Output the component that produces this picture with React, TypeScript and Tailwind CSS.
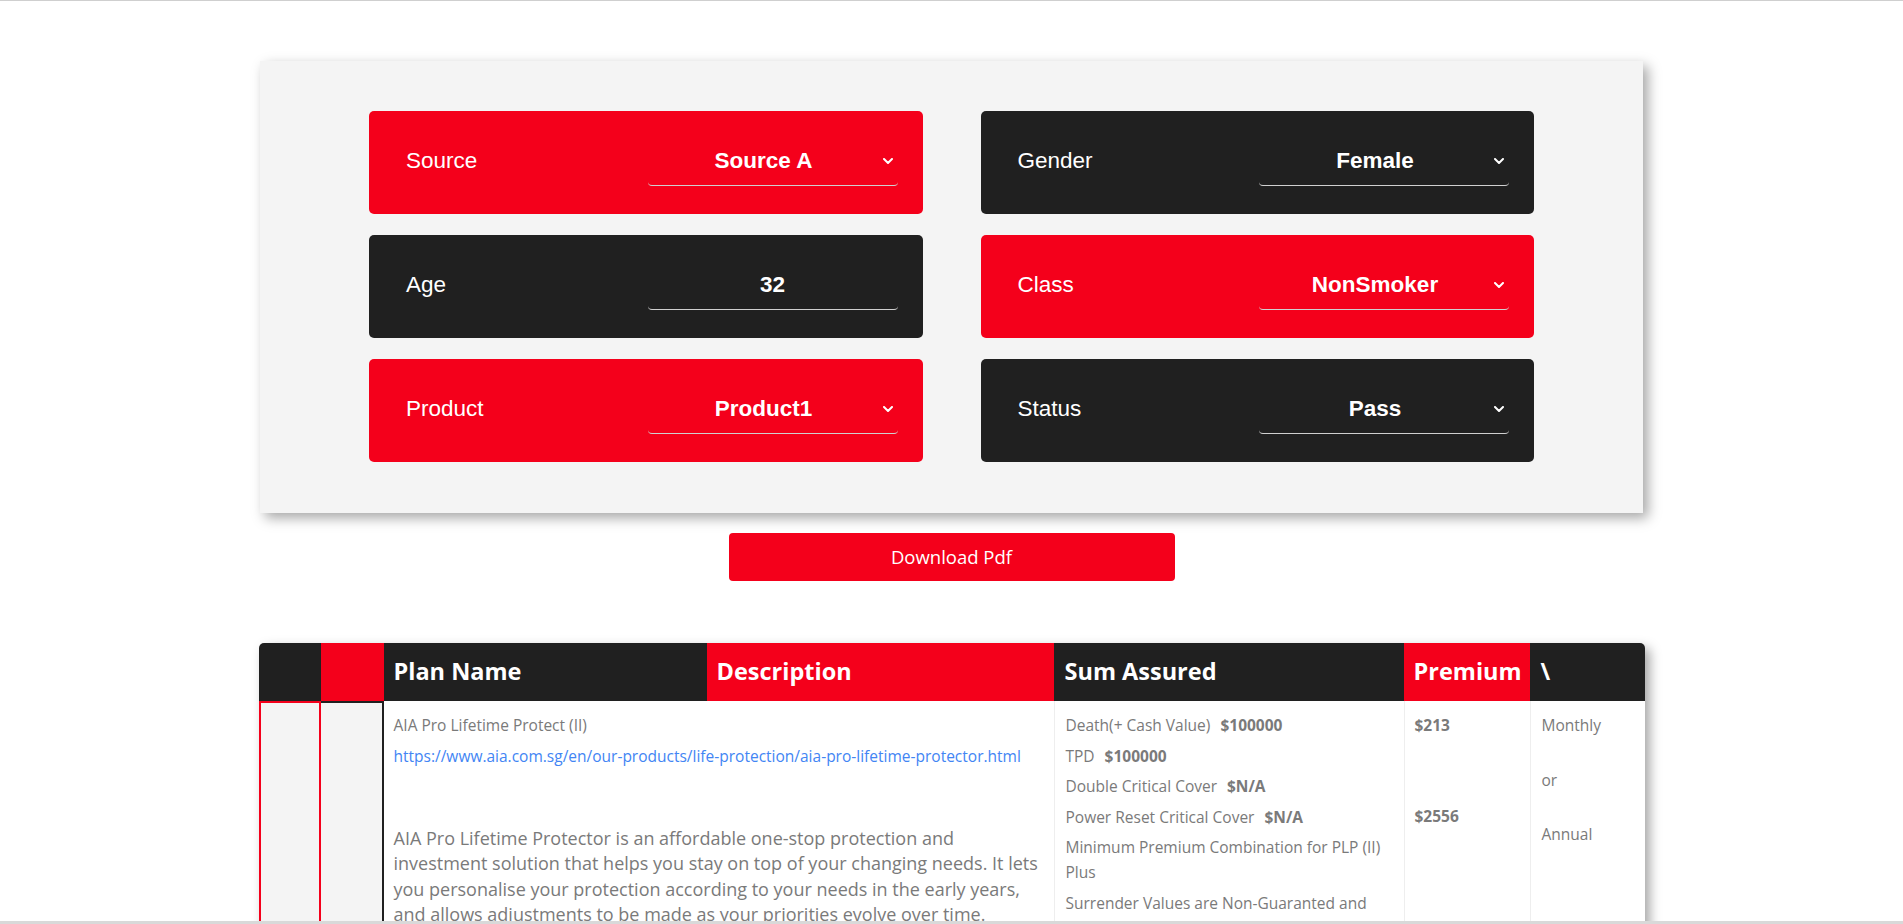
import React from "react";

function Chevron() {
  return (
    <svg width="10" height="6" viewBox="0 0 10 6" fill="none" className="block">
      <path d="M1 1 L5 5 L9 1" stroke="white" strokeWidth="2" strokeLinecap="round" strokeLinejoin="round" />
    </svg>
  );
}

function Field({ label, value, red, chevron = true }: { label: string; value: string; red: boolean; chevron?: boolean }) {
  return (
    <div
      className={`h-[103px] rounded-[5px] flex items-center justify-between pl-[37px] pr-[25px] pb-[4px] ${red ? "bg-[#f4001b]" : "bg-[#202020]"}`}
    >
      <span className="text-[22.5px] text-white font-['Liberation_Sans',Arial,sans-serif]">{label}</span>
      <div className="w-[250px] h-[49px] mt-[2px] flex items-center border-b border-[#d0d0d0] rounded-b-[4px]">
        <span className="flex-1 text-center text-[22.5px] font-bold text-white font-['Liberation_Sans',Arial,sans-serif]">
          {value}
        </span>
        {chevron && (
          <span className="ml-[3px] mr-[5px] w-[10px]">
            <Chevron />
          </span>
        )}
      </div>
    </div>
  );
}

export default function App() {
  const font = "font-['Open_Sans',sans-serif]";
  return (
    <div className={`relative w-full h-[924px] overflow-hidden bg-white border-t border-[#cfcfcf] ${font}`}>
      <div className="mt-[60px] mx-auto w-[1383px] bg-[#f4f4f4] px-[109px] pt-[50px] pb-[51px] shadow-[5px_5px_12px_rgba(0,0,0,0.35)]">
        <div className="grid grid-cols-2 gap-x-[58px] gap-y-[21px]">
          <Field label="Source" value="Source A" red />
          <Field label="Gender" value="Female" red={false} />
          <Field label="Age" value="32" red={false} chevron={false} />
          <Field label="Class" value="NonSmoker" red />
          <Field label="Product" value="Product1" red />
          <Field label="Status" value="Pass" red={false} />
        </div>
      </div>

      <div className="mt-[20px] mx-auto w-[446px] h-[48px] rounded-[4px] bg-[#f4001b] flex items-center justify-center text-white text-[18.5px]">
        Download Pdf
      </div>

      <div className="mt-[62px] mx-auto w-[1386px] rounded-t-[5px] overflow-hidden bg-white shadow-[5px_5px_12px_rgba(0,0,0,0.35)]">
        <div className="grid grid-cols-[62px_63px_323px_347px_350px_126px_115px] h-[58px] text-white font-bold text-[23.5px]">
          <div className="bg-[#202020]" />
          <div className="bg-[#f4001b]" />
          <div className="bg-[#202020] flex items-center pl-[10px]">Plan Name</div>
          <div className="bg-[#f4001b] flex items-center pl-[10px]">Description</div>
          <div className="bg-[#202020] flex items-center pl-[11px]">Sum Assured</div>
          <div className="bg-[#f4001b] flex items-center pl-[10px]">Premium</div>
          <div className="bg-[#202020] flex items-center pl-[11px]">\</div>
        </div>
        <div className="grid grid-cols-[62px_63px_670px_350px_126px_115px] h-[300px] text-[#7a7a7a]">
          <div className="bg-[#f4f4f4] border-l-2 border-t-2 border-r-2 border-[#f4001b]" />
          <div className="bg-[#f4f4f4] border-t-2 border-r-2 border-[#202020]" />
          <div className="px-[10px] pt-[12px]">
            <p className="text-[15.5px] leading-[25px] mb-[5.5px]">AIA Pro Lifetime Protect (II)</p>
            <p className="text-[15.5px] leading-[25px] text-[#4285f4]">
              https://www.aia.com.sg/en/our-products/life-protection/aia-pro-lifetime-protector.html
            </p>
            <p className="mt-[57px] text-[18px] leading-[25.5px]">
              AIA Pro Lifetime Protector is an affordable one-stop protection and investment solution that helps you stay
              on top of your changing needs. It lets you personalise your protection according to your needs in the early
              years, and allows adjustments to be made as your priorities evolve over time.
            </p>
          </div>
          <div className="border-l border-[#eeeeee] px-[11px] pt-[12px] text-[15.5px] leading-[25px]">
            <p className="mb-[5.5px]">
              Death(+ Cash Value)<span className="font-bold ml-[10px]">$100000</span>
            </p>
            <p className="mb-[5.5px]">
              TPD<span className="font-bold ml-[10px]">$100000</span>
            </p>
            <p className="mb-[5.5px]">
              Double Critical Cover<span className="font-bold ml-[10px]">$N/A</span>
            </p>
            <p className="mb-[5.5px]">
              Power Reset Critical Cover<span className="font-bold ml-[10px]">$N/A</span>
            </p>
            <p className="mb-[5.5px]">Minimum Premium Combination for PLP (II) Plus</p>
            <p className="mb-[5.5px]">Surrender Values are Non-Guaranted and may be lower than premiums paid</p>
          </div>
          <div className="border-l border-[#eeeeee] px-[10px] pt-[12px] text-[15.5px] leading-[25px] font-bold">
            <p>$213</p>
            <p className="mt-[66px]">$2556</p>
          </div>
          <div className="border-l border-[#eeeeee] px-[11px] pt-[12px] text-[15.5px] leading-[25px]">
            <p>Monthly</p>
            <p className="mt-[29.5px]">or</p>
            <p className="mt-[29.5px]">Annual</p>
          </div>
        </div>
      </div>

      <div className="absolute left-0 right-0 bottom-0 h-[3px] bg-[#d9d9d9]" />
    </div>
  );
}
